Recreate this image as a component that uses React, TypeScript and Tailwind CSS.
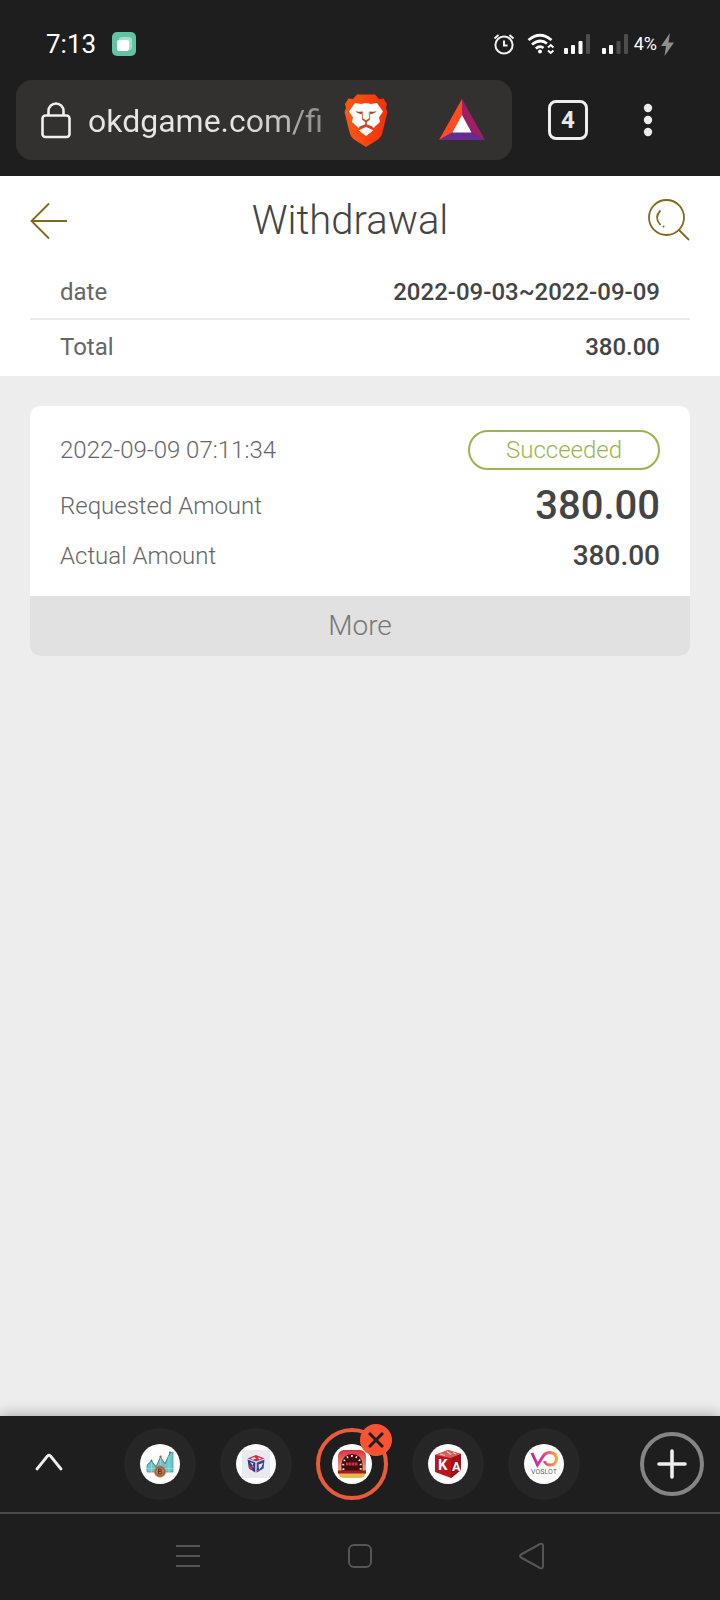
import type { ReactNode } from "react";

function StatusBar() {
  return (
    <div className="flex h-20 items-center pt-2 pr-[46px] pl-[46px] text-white">
      <time className="text-[26px] leading-8">7:13</time>
      <svg className="ml-4" width="24" height="24" viewBox="0 0 24 24">
        <rect width="24" height="24" rx="5" fill="#5fc3a4" />
        <rect x="7" y="5" width="13" height="13" rx="3" fill="#a5dfcc" />
        <rect x="5" y="8" width="12" height="11" rx="2" fill="#fff" />
      </svg>
      <div className="ml-auto flex items-center">
        <svg width="22" height="22" viewBox="0 0 22 22" fill="none" stroke="#f2f2f2" strokeWidth="2">
          <circle cx="11" cy="12" r="8.6" />
          <path d="M11 7.5v5h3.5M1.5 5.5l4-3.5M20.5 5.5l-4-3.5" />
        </svg>
        <svg className="ml-[12px]" width="28" height="22" viewBox="0 0 28 22" fill="none" stroke="#fff" strokeWidth="2.8">
          <path d="M1.500 7Q13 -2.500 24.500 7M5 11.500Q13 5 20 10.500M8.800 15.500Q13 12 16.500 15" />
          <circle cx="13" cy="18.500" r="2" fill="#fff" stroke="none" />
          <path d="M21 14.500l2.700-2.500 2.700 2.500M21 17.500l2.700 2.500 2.700-2.500" strokeWidth="2" />
        </svg>
        <svg className="ml-[9px]" width="26" height="20" viewBox="0 0 26 20" fill="#fff">
          <rect y="14" width="4" height="6" rx="1" />
          <rect x="7" y="11" width="4" height="9" rx="1" />
          <rect x="14.500" y="7" width="4" height="13" rx="1" />
          <rect x="22" width="4" height="20" rx="1" fill="#4d4d4d" />
        </svg>
        <svg className="ml-[12px]" width="26" height="20" viewBox="0 0 26 20" fill="#fff">
          <rect y="14" width="4" height="6" rx="1" />
          <rect x="7" y="11" width="4" height="9" rx="1" />
          <rect x="14.500" y="7" width="4" height="13" rx="1" fill="#4d4d4d" />
          <rect x="22" width="4" height="20" rx="1" fill="#4d4d4d" />
        </svg>
        <span className="ml-[6px] text-[18px] leading-6">4%</span>
        <svg className="ml-1" width="13" height="23" viewBox="0 0 13 23" fill="#8f8f8f">
          <path d="M9 0L0 13h5L3.500 23 13 9.500H7.500z" />
        </svg>
      </div>
    </div>
  );
}

function BraveLogo() {
  return (
    <svg width="44" height="53" viewBox="0 0 44 53">
      <defs>
        <linearGradient id="mane" x1="0" x2="1">
          <stop offset="0" stopColor="#fb5a14" />
          <stop offset="1" stopColor="#f42f0c" />
        </linearGradient>
      </defs>
      <path
        d="M13 0.500H31L35 5L39.500 4.500L43 10L42 14L43.500 18L38 40Q37 43 34 45.500L22 53L10 45.500Q7 43 6 40L0.500 18L2 14L1 10L4.500 4.500L9 5Z"
        fill="url(#mane)"
      />
      <path
        d="M11 9L17 10L22 9L27 10L33 9L39 17.500L35 23.500L36 28L29.500 34L26 31.500L22 30L18 31.500L14.500 34L8 28L9 23.500L5 17.500Z"
        fill="#fff"
      />
      <path d="M22 33.500L28.500 36.500L22 41.500L15.500 36.500Z" fill="#fff" stroke="#fff" strokeLinejoin="round" />
      <path d="M11 17Q14 18.500 18.500 17.200L17.500 20.500Q14 20 11 17ZM33 17Q30 18.500 25.500 17.200L26.500 20.500Q30 20 33 17Z" fill="#9b4936" />
      <path d="M18.800 18L18.300 24.500L22 27L25.700 24.500L25.200 18" fill="none" stroke="#e07a5c" strokeWidth="1.200" />
      <path d="M18.500 25L22 27.800L25.500 25M22 27V31M15.500 33Q19.500 33.500 22 31Q24.500 33.500 28.500 33" fill="none" stroke="#c2492c" strokeWidth="1.600" />
    </svg>
  );
}

function BatLogo() {
  return (
    <svg width="46" height="42" viewBox="0 0 46 42">
      <path d="M23 0L0 41L14.500 33L23 17Z" fill="#ff4b24" />
      <path d="M23 0L46 41L32 33L23 17Z" fill="#9e1f63" />
      <path d="M0 41H46L32 33H14.500Z" fill="#662d91" />
      <path d="M23 16L32.500 33.500H13.500Z" fill="#fff" />
    </svg>
  );
}

function AddressBar() {
  return (
    <div className="flex h-24 items-start pr-[68px] pl-4">
      <div className="flex h-20 min-w-0 flex-1 items-center rounded-2xl bg-[#333030] pr-[27px] pl-[25px]">
        <button type="button" aria-label="Site information">
          <svg width="30" height="37" viewBox="0 0 30 37" fill="none" stroke="#f0f0f0" strokeWidth="2.600">
            <rect x="1.500" y="13.500" width="27" height="21.500" rx="3" />
            <path d="M7.500 13.500V9a7.500 7.500 0 0 1 15 0v4.500" />
          </svg>
        </button>
        <input
          type="text"
          aria-label="Address"
          defaultValue="okdgame.com/fi"
          className="ml-[17px] min-w-0 flex-1 bg-[linear-gradient(90deg,#e6e6e6_0,#e6e6e6_150px,#c0c0c0_196px,#a0a0a0_212px,#909090_232px)] bg-clip-text pt-[2px] text-[32px] leading-10 text-transparent outline-none"
        />
        <button type="button" aria-label="Brave Shields" className="ml-2">
          <BraveLogo />
        </button>
        <button type="button" aria-label="Brave Rewards" className="ml-[51px]">
          <BatLogo />
        </button>
      </div>
      <div className="flex h-20 items-center">
        <button
          type="button"
          aria-label="Open tabs: 4"
          className="ml-9 flex size-10 items-center justify-center rounded-lg border-3 border-[#ededed] text-[24px] leading-6 font-bold text-[#e8e8e8]"
        >
          4
        </button>
        <button type="button" aria-label="Browser menu" className="ml-14">
          <svg width="8" height="32" viewBox="0 0 8 32" fill="#ededed" overflow="visible">
            <circle cx="4" cy="4" r="4.200" />
            <circle cx="4" cy="16" r="4.200" />
            <circle cx="4" cy="28" r="4.200" />
          </svg>
        </button>
      </div>
    </div>
  );
}

function PageHeader() {
  return (
    <header className="flex h-[90px] items-center px-[30px]">
      <button type="button" aria-label="Back" className="w-9 shrink-0">
        <svg width="38" height="36" viewBox="0 0 38 36" fill="none" stroke="#80691f" strokeWidth="1.800" overflow="visible">
          <path d="M19 0.500L1.500 18L19 35.500M1.500 18H37" />
        </svg>
      </button>
      <h1 className="flex-1 text-center text-[40px] leading-[48px] font-light text-[#444]">Withdrawal</h1>
      <button type="button" aria-label="Search" className="flex w-14 shrink-0 justify-end">
        <svg width="42" height="44" viewBox="0 0 42 44" fill="none" stroke="#80691f" strokeWidth="1.800">
          <circle cx="18.500" cy="18.500" r="17.500" />
          <path d="M31 31L41 41M12.500 11.500Q5.500 18.500 12.500 26" />
          <circle cx="15.500" cy="27.500" r="1" fill="#80691f" stroke="none" />
        </svg>
      </button>
    </header>
  );
}

function SummaryRow({ label, value, row }: { label: string; value: string; row: string }) {
  return (
    <div className={`mx-[30px] flex items-center justify-between border-b-2 px-[30px] text-[24px] leading-8 ${row}`}>
      <dt className="text-[#666]">{label}</dt>
      <dd className="font-medium text-[#444]">{value}</dd>
    </div>
  );
}

function RecordCard() {
  return (
    <article className="mx-[30px] mt-[30px] overflow-hidden rounded-[10px] bg-white">
      <div className="px-[30px] pt-6 pb-[15px] text-[24px] leading-8 font-light text-[#666]">
        <div className="flex items-center justify-between">
          <time>2022-09-09 07:11:34</time>
          <span className="flex h-10 w-48 items-center justify-center rounded-full border-2 border-[#9bb44f] text-[#9bb44f]">
            Succeeded
          </span>
        </div>
        <dl className="mt-[11px]">
          <div className="flex h-[50px] items-center justify-between">
            <dt>Requested Amount</dt>
            <dd className="text-[40px] leading-[48px] font-medium text-[#444]">380.00</dd>
          </div>
          <div className="flex h-[50px] items-center justify-between">
            <dt>Actual Amount</dt>
            <dd className="text-[28px] font-medium text-[#444]">380.00</dd>
          </div>
        </dl>
      </div>
      <button type="button" className="h-[60px] w-full bg-[#e1e1e1] text-[28px] leading-8 font-light text-[#777]">
        More
      </button>
    </article>
  );
}

function ChartIcon() {
  return (
    <svg width="28" height="28" viewBox="0 0 28 28">
      <path d="M1 22V15L5.500 11L10 17L14.500 7L19 14L24 3L27 2V22Z" fill="#6cc6d0" stroke="#4897a5" strokeWidth="0.800" />
      <path d="M1 15L5.500 11L10 17L14.500 7L19 14L24 3" fill="none" stroke="#5d7f82" strokeWidth="0.800" />
      <path d="M14.500 8V22M5.500 12V22M23 6V22M1 18.500H27" stroke="#93dada" strokeWidth="0.800" />
      <circle cx="5.500" cy="10.500" r="1" fill="#567" />
      <circle cx="14.500" cy="6.500" r="1" fill="#c33" />
      <circle cx="24" cy="2.500" r="1" fill="#567" />
      <circle cx="14" cy="21.500" r="6" fill="#c07d4e" />
      <circle cx="14" cy="21.500" r="4.500" fill="none" stroke="#8a5436" strokeWidth="0.800" />
      <path d="M12.500 19V24M12.500 19h2.200q1.500 1.200 0 2.400h-2.200 2.500q1.500 1.300 0 2.600h-2.500" fill="none" stroke="#54372c" />
    </svg>
  );
}

function CubeIcon() {
  return (
    <svg width="28" height="28" viewBox="0 0 28 28">
      <rect width="28" height="28" fill="#e9e9f2" />
      <path d="M5.500 8.500L14 5L22.500 8.500L14 11.500Z" fill="#c9304a" />
      <path d="M8.500 8.500L12 7.200L14.500 8.300L11 9.700ZM16 7.300L19.500 8.500L17 9.500Z" fill="#f5e9ee" />
      <path d="M5.500 9.500L13.300 12.500V22.500L7 18.500Z" fill="#25408a" />
      <path d="M22.500 9.500L14.700 12.500V22.500L21.500 18.500Z" fill="#2c4a95" />
      <path d="M6.500 15L10.500 17V20.500L7 18.500ZM14.700 19L17.500 20.500L14.700 22.500Z" fill="#c9304a" />
      <path d="M8 12L11.500 13.500L10 16L12.500 18ZM16.500 14.500L21 13L19.500 17L17 19.500Z" fill="#f1e4ea" />
    </svg>
  );
}

function CasinoIcon() {
  return (
    <svg width="28" height="28" viewBox="0 0 28 28">
      <defs>
        <linearGradient id="casino" x1="0" x2="0" y1="0" y2="1">
          <stop offset="0" stopColor="#e0303c" />
          <stop offset="0.600" stopColor="#ef9078" />
          <stop offset="1" stopColor="#e2c04c" />
        </linearGradient>
      </defs>
      <rect width="28" height="28" rx="6" fill="url(#casino)" />
      <path d="M3.500 21V14Q4.500 4.500 14 4Q23.500 4.500 24.500 14V21Z" fill="#3f1013" />
      <path d="M5.500 20Q3.500 7 14 6Q24.500 7 22.500 20" fill="none" stroke="#f6e9dd" strokeWidth="2" strokeDasharray="1.500 3" />
      <path d="M8 14H20" stroke="#d32f38" strokeWidth="3" strokeDasharray="2.500 0.500" />
      <path d="M0 20.500H28V23.500H0Z" fill="#a51c18" />
    </svg>
  );
}

function KaIcon() {
  return (
    <svg width="28" height="28" viewBox="0 0 28 28">
      <path d="M1 5L14 0L27 4V20L17 28L1 22Z" fill="#ba151c" />
      <path d="M1 5L14 0L27 4L17 8Z" fill="#d96057" />
      <path d="M17 8L27 4V20L17 28Z" fill="#a30e17" />
      <path d="M6 4L11 5.500M13 1.500L17 4.500M19 2.500L22 4" stroke="#f1c7be" strokeWidth="1.200" />
      <text x="4" y="20" fill="#fff" fontFamily="Roboto, sans-serif" fontSize="15" fontWeight="700">K</text>
      <text x="18" y="21" fill="#fff" fontFamily="Roboto, sans-serif" fontSize="13" fontWeight="700">A</text>
    </svg>
  );
}

function VoslotIcon() {
  return (
    <svg width="30" height="26" viewBox="0 0 30 26">
      <defs>
        <linearGradient id="vo" x1="0" x2="1">
          <stop offset="0" stopColor="#b82c9a" />
          <stop offset="0.450" stopColor="#e43c8c" />
          <stop offset="1" stopColor="#f7a82d" />
        </linearGradient>
      </defs>
      <path d="M3 2L8.500 14L15 4Q17 1.500 21 1.500Q27.500 2 27.500 8Q27 14 21 14Q16.500 14 15.500 10" fill="none" stroke="url(#vo)" strokeWidth="3" />
      <text x="15" y="23" textAnchor="middle" fill="#5f5f5f" fontFamily="Roboto, sans-serif" fontSize="7">VOSLOT</text>
    </svg>
  );
}

function TabBubble({ label, children }: { label: string; children: ReactNode }) {
  return (
    <button type="button" aria-label={label} className="flex size-[72px] items-center justify-center rounded-full bg-[#262626]">
      <span className="flex size-10 items-center justify-center overflow-hidden rounded-full bg-white">{children}</span>
    </button>
  );
}

function TabStrip() {
  return (
    <div className="flex h-24 items-center bg-[#1e1e1e] shadow-[0_0_14px_rgba(0,0,0,0.35)]">
      <button type="button" aria-label="Expand tabs" className="flex w-24 justify-center pl-[2px]">
        <svg width="28" height="22" viewBox="0 0 28 22" fill="none" stroke="#ededed" strokeWidth="2.800" strokeLinecap="round" strokeLinejoin="round">
          <path d="M2 16L12.500 3Q14 1.600 15.500 3L26 16" />
        </svg>
      </button>
      <nav aria-label="Tabs" className="ml-7 flex gap-6">
        <TabBubble label="Chart tab"><ChartIcon /></TabBubble>
        <TabBubble label="Cube tab"><CubeIcon /></TabBubble>
        <div className="relative">
          <button
            type="button"
            aria-label="Current tab"
            className="flex size-[72px] items-center justify-center rounded-full border-4 border-[#ea5b3c]"
          >
            <span className="flex size-10 items-center justify-center rounded-full bg-white"><CasinoIcon /></span>
          </button>
          <button
            type="button"
            aria-label="Close tab"
            className="absolute -top-1 -right-1 flex size-8 items-center justify-center rounded-full bg-[#fb5332]"
          >
            <svg width="16" height="16" viewBox="0 0 16 16" stroke="#1e1e1e" strokeWidth="3">
              <path d="M1 1L15 15M15 1L1 15" />
            </svg>
          </button>
        </div>
        <TabBubble label="KA tab"><KaIcon /></TabBubble>
        <TabBubble label="Voslot tab"><VoslotIcon /></TabBubble>
      </nav>
      <button
        type="button"
        aria-label="New tab"
        className="mr-4 ml-auto flex size-16 items-center justify-center rounded-full border-4 border-[#858585]"
      >
        <svg width="30" height="30" viewBox="0 0 30 30" stroke="#ededed" strokeWidth="3.600" strokeLinecap="round">
          <path d="M15 2V28M2 15H28" />
        </svg>
      </button>
    </div>
  );
}

function SystemNav() {
  return (
    <div className="grid h-[88px] grid-cols-3 items-center justify-items-center border-t-2 border-[#4b4b4b] bg-[#1e1e1e] px-[102px] pb-[2px]">
      <button type="button" aria-label="Recent apps">
        <svg width="24" height="24" viewBox="0 0 24 24" stroke="#555" strokeWidth="2">
          <path d="M0 2H24M0 12H24M0 22H24" />
        </svg>
      </button>
      <button type="button" aria-label="Home">
        <svg width="24" height="24" viewBox="0 0 24 24" fill="none" stroke="#555" strokeWidth="2">
          <rect x="1" y="1" width="22" height="22" rx="5" />
        </svg>
      </button>
      <button type="button" aria-label="System back">
        <svg width="26" height="28" viewBox="0 0 26 28" fill="none" stroke="#555" strokeWidth="2" strokeLinejoin="round">
          <path d="M2 12.500L21 2Q24 0.800 24 4V24Q24 27.200 21 26L2 15.500Q0 14 2 12.500Z" />
        </svg>
      </button>
    </div>
  );
}

export default function App() {
  return (
    <div className="flex min-h-screen flex-col bg-[#ededed] font-['Roboto',sans-serif]">
      <div className="bg-[#1e1e1e]">
        <StatusBar />
        <AddressBar />
      </div>
      <main className="flex-1">
        <section className="bg-white">
          <PageHeader />
          <dl>
            <SummaryRow label="date" value="2022-09-03~2022-09-09" row="h-[54px] border-[#ebebeb]" />
            <SummaryRow label="Total" value="380.00" row="h-14 border-white" />
          </dl>
        </section>
        <RecordCard />
      </main>
      <footer>
        <TabStrip />
        <SystemNav />
      </footer>
    </div>
  );
}
